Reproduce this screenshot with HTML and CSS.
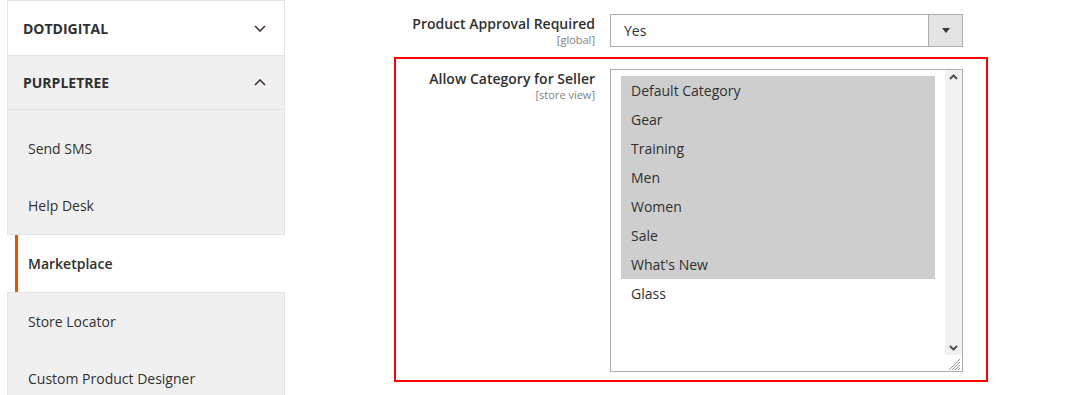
FILE: index.html
```html
<!DOCTYPE html>
<html lang="en">
<head>
    <meta charset="UTF-8">
    <meta name="viewport" content="width=device-width, initial-scale=1.0">
    <title>Configuration - Marketplace</title>
    <link rel="stylesheet" href="styles.css">
</head>
<body>
    <div class="page">
        <aside class="config-nav">
            <div class="nav-block">
                <div class="nav-title nav-title-first">
                    <span>DOTDIGITAL</span>
                    <svg class="chevron" width="12" height="7" viewBox="0 0 12 7"><polyline points="1,1 6,6 11,1" /></svg>
                </div>
            </div>
            <div class="nav-block open">
                <div class="nav-title">
                    <span>PURPLETREE</span>
                    <svg class="chevron" width="12" height="7" viewBox="0 0 12 7"><polyline points="1,6 6,1 11,6" /></svg>
                </div>
                <ul class="nav-items">
                    <li class="nav-item">Send SMS</li>
                    <li class="nav-item">Help Desk</li>
                    <li class="nav-item active">Marketplace</li>
                    <li class="nav-item">Store Locator</li>
                    <li class="nav-item">Custom Product Designer</li>
                </ul>
            </div>
        </aside>

        <main class="config-form">
            <div class="field">
                <div class="field-label">
                    <label>Product Approval Required</label>
                    <span class="scope">[global]</span>
                </div>
                <div class="select">
                    <span class="select-value">Yes</span>
                    <span class="select-arrow"><i class="triangle"></i></span>
                </div>
            </div>

            <div class="field field-marked">
                <div class="field-label">
                    <label>Allow Category for Seller</label>
                    <span class="scope">[store view]</span>
                </div>
                <div class="multiselect">
                    <ul class="options">
                        <li class="option selected">Default Category</li>
                        <li class="option selected">Gear</li>
                        <li class="option selected">Training</li>
                        <li class="option selected">Men</li>
                        <li class="option selected">Women</li>
                        <li class="option selected">Sale</li>
                        <li class="option selected">What's New</li>
                        <li class="option">Glass</li>
                    </ul>
                    <div class="scroll-col">
                        <div class="scrollbar">
                            <svg class="scroll-arrow" width="17" height="14" viewBox="0 0 17 14"><polyline points="5,9 8.5,5.5 12,9" /></svg>
                            <svg class="scroll-arrow" width="17" height="14" viewBox="0 0 17 14"><polyline points="5,5 8.5,8.5 12,5" /></svg>
                        </div>
                        <svg class="resizer" width="17" height="16" viewBox="0 0 17 16">
                            <line x1="4" y1="15" x2="15" y2="4" />
                            <line x1="7" y1="15" x2="15" y2="7" />
                            <line x1="10" y1="15" x2="15" y2="10" />
                            <line x1="13" y1="15" x2="15" y2="13" />
                        </svg>
                    </div>
                </div>
            </div>
        </main>
    </div>
</body>
</html>
```

FILE: styles.css
```css
* {
    margin: 0;
    padding: 0;
    box-sizing: border-box;
}

body {
    font-family: 'Open Sans', 'Liberation Sans', sans-serif;
    font-size: 14px;
    color: #303030;
    background: #fff;
    overflow: hidden;
}

.page {
    display: flex;
    align-items: flex-start;
}

/* sidebar */

.config-nav {
    width: 278px;
    margin-left: 7px;
    flex-shrink: 0;
}

.nav-title {
    display: flex;
    align-items: center;
    justify-content: space-between;
    height: 54px;
    padding: 0 18px 0 15px;
    border: 1px solid #e3e3e3;
    border-top: none;
    background: #fff;
    font-weight: 700;
    color: #303030;
}

.nav-title-first {
    height: 56px;
    border-top: 1px solid #e3e3e3;
}

.nav-block.open .nav-title {
    background: #f0f0f0;
}

.chevron polyline {
    fill: none;
    stroke: #41362f;
    stroke-width: 1.6;
}

.nav-items {
    list-style: none;
    padding-top: 10px;
    background: #f0f0f0;
    border-left: 1px solid #e3e3e3;
    border-right: 1px solid #e3e3e3;
}

.nav-item {
    height: 57px;
    line-height: 57px;
    padding-left: 20px;
    white-space: nowrap;
}

.nav-item.active {
    height: 59px;
    margin: 0 -1px;
    padding-left: 21px;
    border-top: 1px solid #e3e3e3;
    border-bottom: 1px solid #e3e3e3;
    background: linear-gradient(to right, #fff 0, #fff 8px, #eb5202 8px, #eb5202 11px, #fff 11px);
    font-weight: 600;
}

/* form */

.config-form {
    margin-left: 109px;
    padding-top: 2px;
}

.field {
    display: grid;
    grid-template-columns: 199px 353px;
    column-gap: 15px;
    padding: 10px 23px 8px 0;
    border: 2px solid transparent;
}

.field-marked {
    border-color: #f00;
}

.field-label {
    text-align: right;
}

.field-label label {
    display: block;
    font-weight: 600;
    line-height: 19px;
    white-space: nowrap;
}

.scope {
    display: block;
    font-size: 11px;
    line-height: 13px;
    color: #808080;
}

.select {
    display: flex;
    height: 33px;
    border: 1px solid #adadad;
    background: #fff;
}

.select-value {
    flex: 1;
    padding-left: 13px;
    line-height: 31px;
}

.select-arrow {
    width: 34px;
    display: flex;
    align-items: center;
    justify-content: center;
    border-left: 1px solid #adadad;
    background: #e3e3e3;
}

.triangle {
    width: 0;
    height: 0;
    border-left: 4px solid transparent;
    border-right: 4px solid transparent;
    border-top: 5px solid #41362f;
}

.multiselect {
    display: flex;
    height: 303px;
    border: 1px solid #adadad;
    background: #fff;
}

.options {
    flex: 1;
    list-style: none;
    padding: 6px 10px;
}

.option {
    height: 29px;
    line-height: 29px;
    padding-left: 10px;
}

.option.selected {
    background: #cecece;
}

.scroll-col {
    width: 17px;
    display: flex;
    flex-direction: column;
}

.scrollbar {
    flex: 1;
    display: flex;
    flex-direction: column;
    justify-content: space-between;
    background: #f1f1f1;
}

.scroll-arrow polyline {
    fill: none;
    stroke: #505050;
    stroke-width: 2;
}

.resizer line {
    stroke: #9a9a9a;
    stroke-width: 1;
}
```
